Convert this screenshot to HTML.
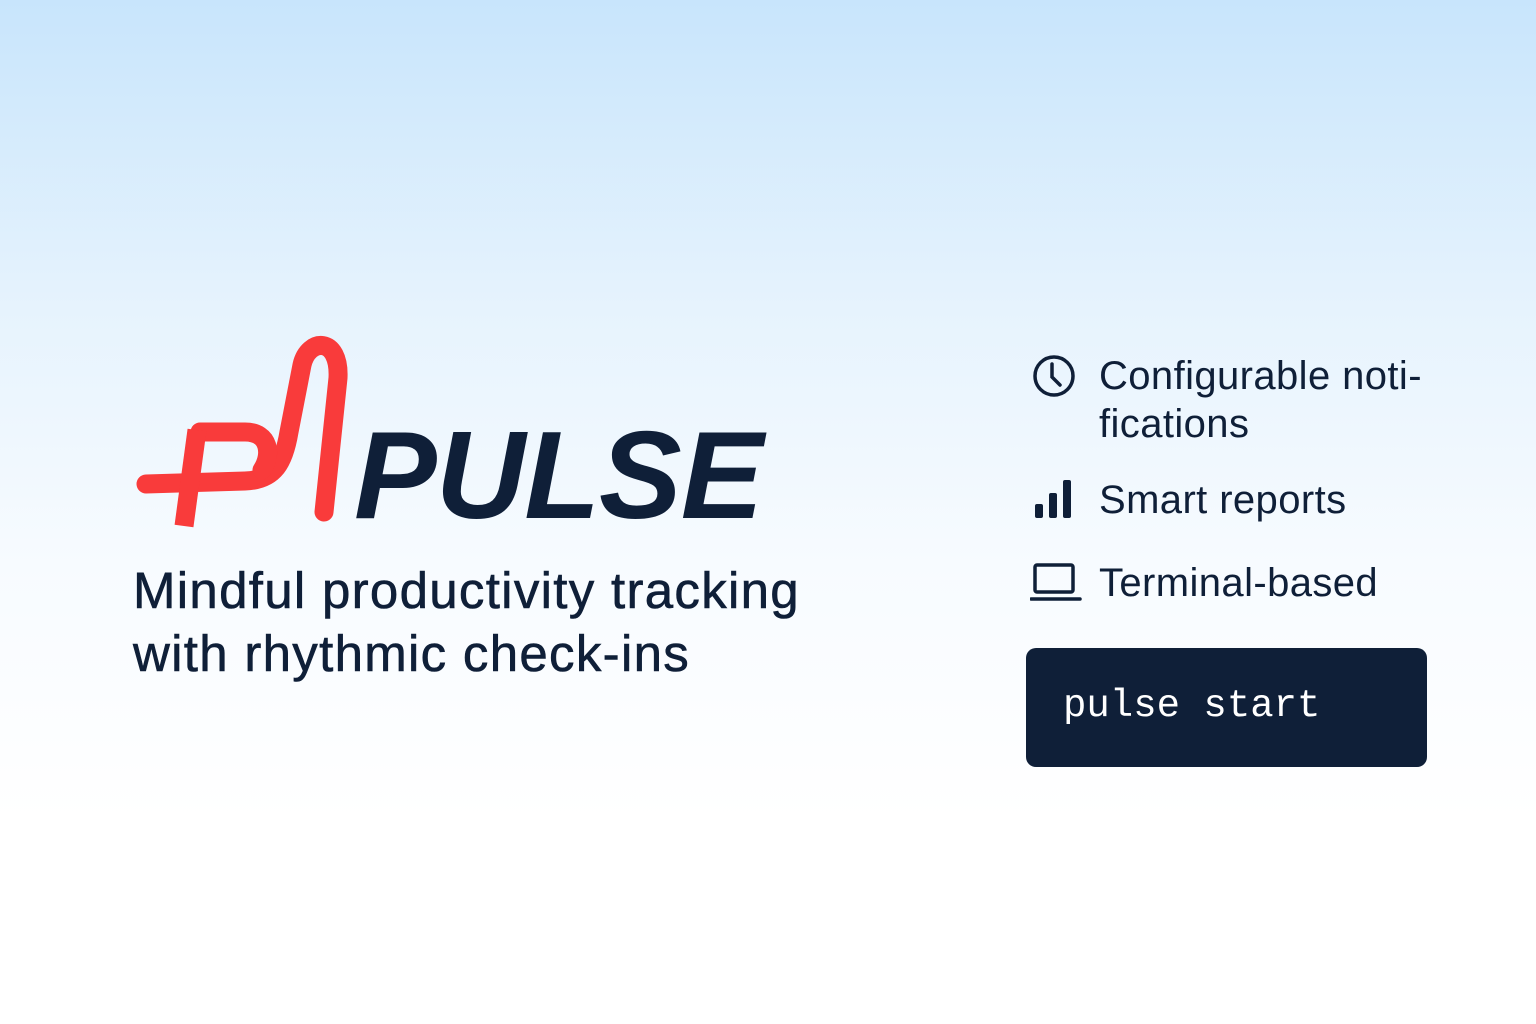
<!DOCTYPE html>
<html><head><style>
body{margin:0;width:1536px;height:1024px;overflow:hidden;background:linear-gradient(180deg,#c8e5fc 0%,#e6f3fd 30%,#f7fbff 55%,#ffffff 80%);font-family:"Liberation Sans",sans-serif;color:#0f1f38;position:relative}
.a{position:absolute;white-space:nowrap}
.pulse{left:354px;top:414px;font-size:124px;font-weight:bold;font-style:italic;letter-spacing:-1px;line-height:1}
.tag{left:133px;top:559px;font-size:51px;line-height:63px;letter-spacing:1.3px;-webkit-text-stroke:0.6px #0f1f38}
.f{left:1099px;font-size:40px;line-height:48px;letter-spacing:0.4px}
.btn{left:1026px;top:648px;width:401px;height:119px;background:#0f1f38;border-radius:10px}
.btn span{position:absolute;left:37px;top:36px;color:#fff;font-family:"Liberation Mono",monospace;font-size:39px}
</style></head><body>
<svg class="a" style="left:0;top:0" width="800" height="560">
<g fill="none" stroke="#f93b3b" stroke-width="19" stroke-linecap="round" stroke-linejoin="round">
<path d="M146,484 L245,481 C275,480 284,462 289,432 L302,365 C308,338 340,336 338,378 L324,512"/>
<path d="M200,432 L245,432 C270,432 272,455 262,470"/>
<path d="M197,430 L184,526" stroke-linecap="butt"/>
</g></svg>
<div class="a pulse">PULSE</div>
<div class="a tag">Mindful productivity tracking<br>with rhythmic check-ins</div>
<svg class="a" style="left:1030px;top:352px" width="52" height="254" fill="none" stroke="#0f1f38" stroke-width="3.5">
<circle cx="24" cy="24" r="19"/><path d="M22,12 V25 L30,33" stroke-linecap="round"/>
<g fill="#0f1f38" stroke="none"><rect x="5" y="152" width="8" height="14" rx="2"/><rect x="19" y="141" width="8" height="25" rx="2"/><rect x="33" y="128" width="8" height="38" rx="2"/></g>
<rect x="5" y="213" width="38" height="27" rx="2"/><path d="M1,247 H50" stroke-linecap="round"/>
</svg>
<div class="a f" style="top:352px">Configurable noti-<br>fications</div>
<div class="a f" style="top:476px">Smart reports</div>
<div class="a f" style="top:559px">Terminal-based</div>
<div class="a btn"><span>pulse start</span></div>
</body></html>
